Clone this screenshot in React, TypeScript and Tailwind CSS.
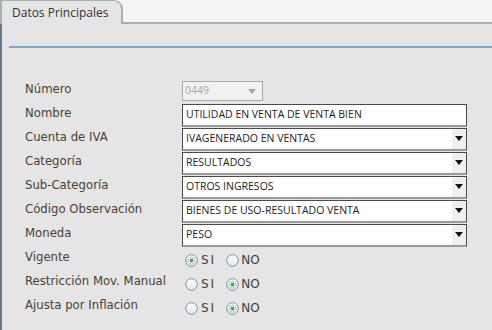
import React from 'react';

const labelFont = { fontFamily: '"DejaVu Sans", Verdana, sans-serif' };
const inputFont = { fontFamily: '"Open Sans", "Noto Sans", Arial, sans-serif' };

function Arrow({ color = '#111' }: { color?: string }) {
  return (
    <svg width="8" height="5" viewBox="0 0 8 5">
      <path d="M0 0 L8 0 L4 5 Z" fill={color} />
    </svg>
  );
}

function TextBox({ value }: { value: string }) {
  return (
    <div
      className="h-[23px] w-[285px] bg-white border border-[#4a4a4a] border-b-2 border-b-[#9a9a9a] flex items-center px-[3px] text-[10.5px] text-[#222] whitespace-nowrap"
      style={inputFont}
    >
      {value}
    </div>
  );
}

function SelectBox({ value }: { value: string }) {
  return (
    <div
      className="h-[23px] w-[285px] bg-white border border-[#4a4a4a] border-b-2 border-b-[#9a9a9a] flex items-stretch text-[10.5px] text-[#222]"
      style={inputFont}
    >
      <div className="flex-1 flex items-center px-[3px] whitespace-nowrap">{value}</div>
      <div className="w-[14px] bg-[#efefef] flex items-center justify-center">
        <Arrow />
      </div>
    </div>
  );
}

function Radio({ checked }: { checked?: boolean }) {
  return (
    <svg width="13" height="13" viewBox="0 0 13 13">
      <defs>
        <linearGradient id="rg" x1="0" y1="0" x2="0" y2="1">
          <stop offset="0" stopColor="#ffffff" />
          <stop offset="1" stopColor="#dfe6ee" />
        </linearGradient>
      </defs>
      <circle cx="6.5" cy="6.5" r="5.8" fill="url(#rg)" stroke="#7a8ea8" strokeWidth="1" />
      {checked && <circle cx="6.5" cy="6.5" r="3.4" fill="#ffffff" stroke="#9fb2c8" strokeWidth="0.8" />}
      {checked && <circle cx="6.5" cy="6.5" r="1.9" fill="#2fb52f" />}
    </svg>
  );
}

function YesNo({ yes }: { yes: boolean }) {
  return (
    <div className="flex items-center pl-[3px] pt-[2px] text-[12px] text-[#3d3d3d]" style={labelFont}>
      <Radio checked={yes} />
      <span className="ml-[3px] tracking-[2px]">SI</span>
      <span className="ml-[10px] flex items-center">
        <Radio checked={!yes} />
        <span className="ml-[2px]">NO</span>
      </span>
    </div>
  );
}

const rows: { label: string; field: React.ReactNode }[] = [
  {
    label: 'Número',
    field: (
      <div
        className="h-[20px] w-[81px] bg-[#f1f1f1] border border-[#a9a9a9] flex items-center justify-between pl-[2px] pr-[6px] text-[10.5px] text-[#a8a8a8]"
        style={inputFont}
      >
        <span>0449</span>
        <Arrow color="#a8a8a8" />
      </div>
    ),
  },
  { label: 'Nombre', field: <TextBox value="UTILIDAD EN VENTA DE VENTA BIEN" /> },
  { label: 'Cuenta de IVA', field: <SelectBox value="IVAGENERADO EN VENTAS" /> },
  { label: 'Categoría', field: <SelectBox value="RESULTADOS" /> },
  { label: 'Sub-Categoría', field: <SelectBox value="OTROS INGRESOS" /> },
  { label: 'Código Observación', field: <SelectBox value="BIENES DE USO-RESULTADO VENTA" /> },
  { label: 'Moneda', field: <SelectBox value="PESO" /> },
  { label: 'Vigente', field: <YesNo yes={true} /> },
  { label: 'Restricción Mov. Manual', field: <YesNo yes={false} /> },
  { label: 'Ajusta por Inflación', field: <YesNo yes={false} /> },
];

export default function App() {
  return (
    <div className="w-[492px] h-[330px] bg-[#e5e5e5] overflow-hidden flex flex-col">
      {/* Tab strip */}
      <div className="h-[24px] flex bg-[#f4f4f4] shrink-0">
        <div
          className="w-[123px] bg-[#e5e5e5] border-l-2 border-t border-r-2 border-[#a9b0b2] rounded-tr-[9px] flex items-center pl-[10px] text-[12px] text-[#333]"
          style={inputFont}
        >
          Datos Principales
        </div>
        <div className="flex-1 border-b-2 border-[#a9b0b2]" />
      </div>

      {/* Body */}
      <div className="flex-1 border-l-2 border-[#66798a]">
        <div className="ml-[7px] mt-[22px] h-[2px] bg-[#7ba7d0]" />

        <div className="mt-[31px] ml-[23px] flex flex-col">
          {rows.map((r) => (
            <div key={r.label} className="h-[24px] flex items-center">
              <div className="w-[157px] text-[11.7px] text-[#4a3f36] pb-[3px] whitespace-nowrap" style={labelFont}>
                {r.label}
              </div>
              {r.field}
            </div>
          ))}
        </div>
      </div>
    </div>
  );
}
